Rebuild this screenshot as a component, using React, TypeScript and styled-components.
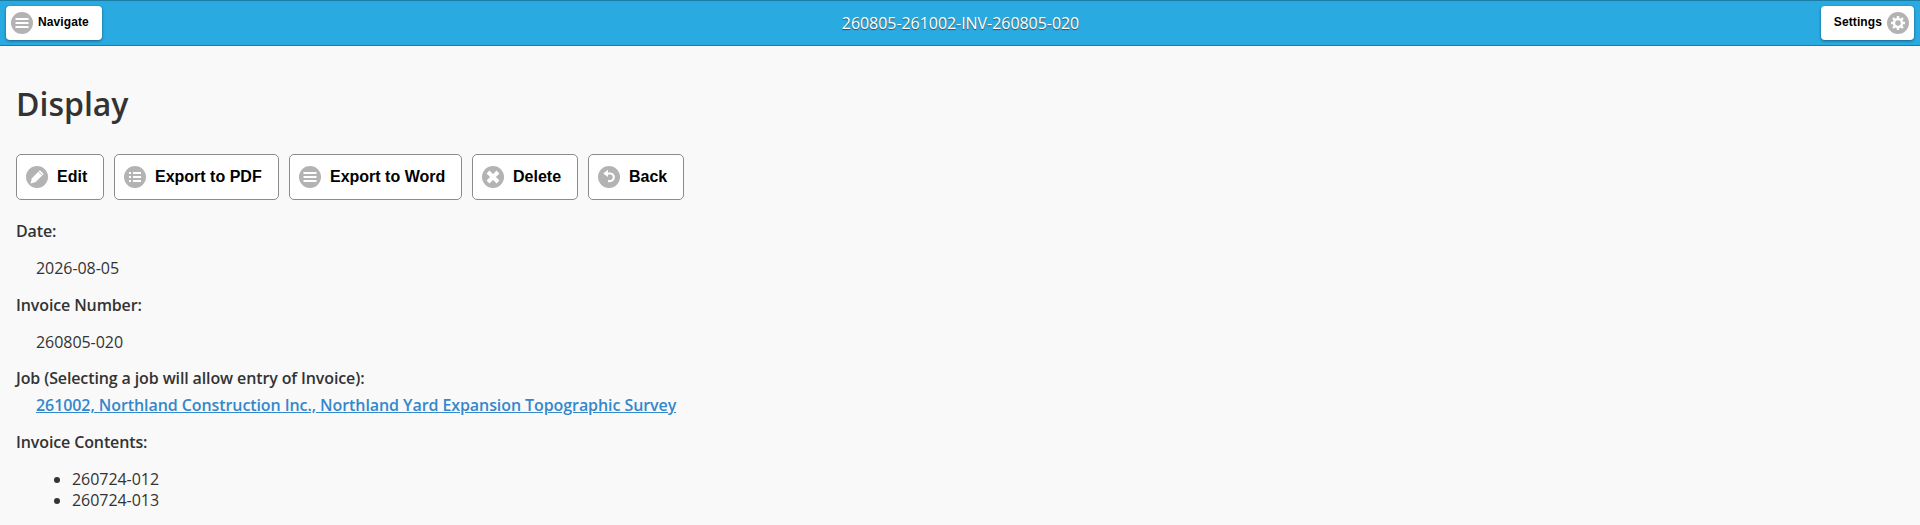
import styled, { createGlobalStyle } from "styled-components";

/* ── Styles ── */

const GlobalStyle = createGlobalStyle`
  html, body { margin: 0; padding: 0; }
  body {
    background: #f9f9f9;
    color: #333;
    font-family: "Open Sans", sans-serif;
    font-size: 16px;
    line-height: 1.3;
  }
`;

const Header = styled.header`
  display: flex;
  align-items: center;
  justify-content: space-between;
  box-sizing: border-box;
  height: 46px;
  padding: 0 6px;
  background: #29abe2;
  border-top: 1px solid #1b7ca6;
  border-bottom: 1px solid #1b7ca6;
`;

const Title = styled.h2`
  margin: 0 2px 0 0;
  font-size: 16px;
  font-weight: 400;
  letter-spacing: -0.05px;
  color: #fff;
  text-shadow: 0 1px 1px #444;
`;

const HeaderButton = styled.a<{ $width: number; $end?: boolean }>`
  display: flex;
  align-items: center;
  justify-content: ${({ $end }) => ($end ? "flex-end" : "flex-start")};
  gap: 5px;
  box-sizing: border-box;
  width: ${({ $width }) => $width}px;
  height: 34px;
  padding: 0 5px;
  background: #fff;
  border-radius: 4px;
  box-shadow: 0 1px 3px rgba(0, 0, 0, 0.45);
  font-family: "Liberation Sans", Arial, sans-serif;
  font-size: 12px;
  font-weight: 700;
  letter-spacing: 0.1px;
  color: #000;
`;

const Main = styled.main`
  padding: 16px;
`;

const Heading = styled.h1`
  margin: 21px 0 29px;
  font-size: 32px;
  line-height: 42px;
  font-weight: 600;
  color: #333;
`;

const Toolbar = styled.div`
  display: flex;
  gap: 10px;
  margin-bottom: 21px;
`;

const ActionButton = styled.a<{ $width: number }>`
  display: flex;
  align-items: center;
  gap: 9px;
  box-sizing: border-box;
  width: ${({ $width }) => $width}px;
  height: 46px;
  padding: 0 9px;
  background: #fff;
  border: 1px solid #8c8c8c;
  border-radius: 5px;
  font-family: "Liberation Sans", Arial, sans-serif;
  font-size: 16px;
  font-weight: 700;
  color: #000;
`;

const IconCircle = styled.svg`
  display: block;
  flex: none;
  width: 22px;
  height: 22px;
`;

const Label = styled.div`
  font-weight: 600;
  line-height: 21px;
  letter-spacing: -0.12px;
`;

const Value = styled.div`
  padding: 16px 0 15.5px 20px;
  line-height: 21px;
  letter-spacing: -0.05px;
`;

const JobValue = styled.div`
  padding: 6px 0 16px 20px;
  line-height: 21px;
`;

const JobLink = styled.a`
  color: #3388cc;
  font-weight: 600;
  letter-spacing: -0.08px;
  text-decoration: underline;
`;

const Contents = styled.ul`
  margin: 16px 0 0;
  padding: 0 0 0 56px;
  line-height: 21px;
  letter-spacing: -0.05px;
`;

/* ── Icons ── */

type IconKind = "bars" | "list" | "edit" | "delete" | "back" | "gear";

function Icon({ kind }: { kind: IconKind }) {
	return (
		<IconCircle viewBox="0 0 22 22">
			<circle cx="11" cy="11" r="11" fill="#b3b3b3" />
			{kind === "bars" && (
				<path d="M4.5 7h13M4.5 11h13M4.5 15h13" stroke="#fff" strokeWidth="2" fill="none" />
			)}
			{kind === "list" && (
				<path
					d="M5 7h2M9 7h8M5 11h2M9 11h8M5 15h2M9 15h8"
					stroke="#fff"
					strokeWidth="2"
					fill="none"
				/>
			)}
			{kind === "edit" && (
				<>
					<path d="M4.5 17.5l1.4-5.2 8-8 3.8 3.8-8 8z" fill="#fff" />
					<path d="M12.8 5.8l3.4 3.4" stroke="#b3b3b3" strokeWidth="0.8" fill="none" />
				</>
			)}
			{kind === "delete" && (
				<path d="M6 6l10 10M16 6L6 16" stroke="#fff" strokeWidth="4" fill="none" />
			)}
			{kind === "back" && (
				<>
					<path
						d="M9 7.5h3a3.8 3.8 0 0 1 0 7.6h-2"
						stroke="#fff"
						strokeWidth="2.2"
						fill="none"
					/>
					<path d="M10 3.8v7.2L5.2 7.4z" fill="#fff" />
				</>
			)}
			{kind === "gear" && (
				<>
					<circle cx="11" cy="11" r="4" stroke="#fff" strokeWidth="2.4" fill="none" />
					<path
						d="M11 4v3M11 15v3M4 11h3M15 11h3M6 6l2 2M14 14l2 2M16 6l-2 2M8 14l-2 2"
						stroke="#fff"
						strokeWidth="2.4"
						fill="none"
					/>
				</>
			)}
		</IconCircle>
	);
}

const actions: { label: string; icon: IconKind; width: number }[] = [
	{ label: "Edit", icon: "edit", width: 88 },
	{ label: "Export to PDF", icon: "list", width: 165 },
	{ label: "Export to Word", icon: "bars", width: 173 },
	{ label: "Delete", icon: "delete", width: 106 },
	{ label: "Back", icon: "back", width: 96 },
];

export default function App() {
	return (
		<>
			<GlobalStyle />
			<Header>
				<HeaderButton $width={96}>
					<Icon kind="bars" />
					Navigate
				</HeaderButton>
				<Title>260805-261002-INV-260805-020</Title>
				<HeaderButton $width={93} $end>
					Settings
					<Icon kind="gear" />
				</HeaderButton>
			</Header>
			<Main>
				<Heading>Display</Heading>
				<Toolbar>
					{actions.map((action) => (
						<ActionButton key={action.label} $width={action.width}>
							<Icon kind={action.icon} />
							{action.label}
						</ActionButton>
					))}
				</Toolbar>
				<Label>Date:</Label>
				<Value>2026-08-05</Value>
				<Label>Invoice Number:</Label>
				<Value>260805-020</Value>
				<Label>Job (Selecting a job will allow entry of Invoice):</Label>
				<JobValue>
					<JobLink>261002, Northland Construction Inc., Northland Yard Expansion Topographic Survey</JobLink>
				</JobValue>
				<Label>Invoice Contents:</Label>
				<Contents>
					<li>260724-012</li>
					<li>260724-013</li>
				</Contents>
			</Main>
		</>
	);
}
